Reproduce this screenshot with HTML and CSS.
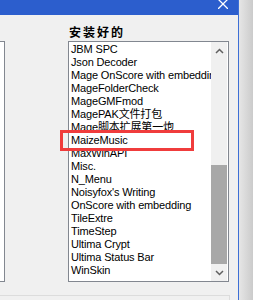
FILE: index.html
```html
<!DOCTYPE html>
<html lang="zh">

<head>
    <meta charset="UTF-8">
    <title>插件管理</title>
    <link rel="stylesheet" href="styles.css">
</head>

<body>
    <div class="desktop">
        <div class="window">
            <div class="title-bar">
                <svg class="close-icon" width="10" height="9" viewBox="0 1 10 9">
                    <path d="M0 0 L10 10 M10 0 L0 10" stroke="#fff" stroke-width="1.3" fill="none"/>
                </svg>
            </div>
            <div class="client">
                <div class="panes">
                    <div class="list-box left-list"></div>
                    <div class="column">
                        <div class="label">安装好的</div>
                        <div class="list-box installed">
                            <ul class="items">
                                <li>JBM SPC</li>
                                <li>Json Decoder</li>
                                <li>Mage OnScore with embedding</li>
                                <li>MageFolderCheck</li>
                                <li>MageGMFmod</li>
                                <li>MagePAK文件打包</li>
                                <li>Mage脚本扩展第一炮</li>
                                <li>MaizeMusic</li>
                                <li>MaxWinAPI</li>
                                <li>Misc.</li>
                                <li>N_Menu</li>
                                <li>Noisyfox's Writing</li>
                                <li>OnScore with embedding</li>
                                <li>TileExtre</li>
                                <li>TimeStep</li>
                                <li>Ultima Crypt</li>
                                <li>Ultima Status Bar</li>
                                <li>WinSkin</li>
                            </ul>
                            <div class="scrollbar">
                                <div class="arrow-btn">
                                    <svg width="9" height="6" viewBox="0 0 9 6">
                                        <path d="M1 5 L4.5 1.5 L8 5" stroke="#606060" stroke-width="1.5" fill="none"/>
                                    </svg>
                                </div>
                                <div class="track">
                                    <div class="thumb"></div>
                                </div>
                                <div class="arrow-btn">
                                    <svg width="9" height="6" viewBox="0 0 9 6">
                                        <path d="M1 1 L4.5 4.5 L8 1" stroke="#606060" stroke-width="1.5" fill="none"/>
                                    </svg>
                                </div>
                            </div>
                            <!-- marca roja sobre el elemento -->
                            <div class="highlight"></div>
                        </div>
                    </div>
                </div>
                <div class="bottom-box"></div>
            </div>
        </div>
        <div class="shadow"></div>
    </div>
</body>

</html>
```

FILE: styles.css
```css
body {
    margin: 0;
    background-color: #f0f0f0;
    font-family: "Liberation Sans", Arial, sans-serif;
}
.desktop {
    display: flex;
    width: 253px;
    height: 300px;
    overflow: hidden;
}
.window {
    width: 238px;
    border-right: 1px solid #3d6fd6;
    background-color: #f0f0f0;
    display: flex;
    flex-direction: column;
}
.shadow {
    flex: 1;
    background: linear-gradient(to right, #e6e6e6, #cbcbcb);
}
.title-bar {
    height: 15px;
    flex-shrink: 0;
    background-color: #2c5ecd;
    display: flex;
    justify-content: flex-end;
    align-items: flex-start;
    padding-right: 10px;
    overflow: hidden;
}
.close-icon {
    display: block;
}
.client {
    flex-shrink: 0;
    padding-top: 9px;
}
.panes {
    display: flex;
    align-items: flex-end;
    gap: 63px;
}
.list-box {
    background-color: white;
    border: 1px solid #828790;
    height: 239px;
}
.left-list {
    width: 4px;
    border-left: none;
}
.column {
    display: flex;
    flex-direction: column;
}
.label {
    font-family: "Noto Sans CJK SC", sans-serif;
    font-weight: bold;
    font-size: 12px;
    line-height: 16px;
    letter-spacing: 2px;
    margin-left: 1px;
    margin-bottom: 1px;
    color: #000;
}
.installed {
    width: 159px;
    display: flex;
    position: relative;
}
.items {
    list-style: none;
    margin: 0;
    padding: 1px 0 0 2px;
    flex: 1;
    overflow: hidden;
    font-size: 11px;
    line-height: 13px;
    letter-spacing: -0.15px;
    color: #000;
}
.items li {
    white-space: nowrap;
    font-family: "Liberation Sans", "Noto Sans CJK SC", sans-serif;
}
.scrollbar {
    width: 16px;
    margin-right: 1px;
    display: flex;
    flex-direction: column;
    background-color: #f0f0f0;
}
.arrow-btn {
    height: 17px;
    display: flex;
    align-items: center;
    justify-content: center;
}
.track {
    flex: 1;
    display: flex;
    flex-direction: column;
    justify-content: flex-end;
}
.thumb {
    height: 99px;
    background-color: #a8a8a8;
}
.highlight {
    position: absolute;
    left: -9px;
    top: 88px;
    width: 128px;
    height: 15px;
    border: 3px solid #f03c3c;
}
.bottom-box {
    margin-top: 13px;
    width: 229px;
    height: 4px;
    border-top: 1px solid #dcdcdc;
    border-right: 1px solid #dcdcdc;
}
```
